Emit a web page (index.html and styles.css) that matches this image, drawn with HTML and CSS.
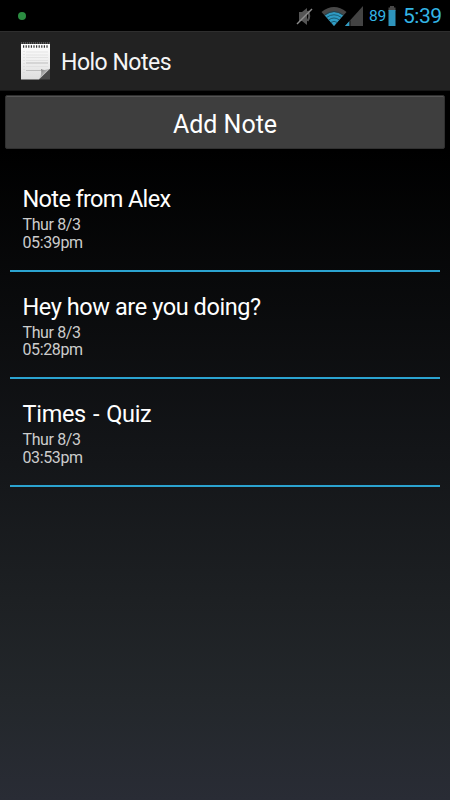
FILE: index.html
```html
<!DOCTYPE html>
<html>
    <head>
        <meta charset="utf-8">
        <title>Holo Notes</title>
        <link rel="stylesheet" href="styles.css">
    </head>
    <body>
        <div class="statusbar">
            <span class="led"></span>
            <svg class="mute" width="17" height="20" viewBox="0 0 17 20">
                <path d="M3 6h3l5-4v17l-5-4H3z" fill="#555"/>
                <path d="M11.500 5q3.500 5 0 10" fill="none" stroke="#555" stroke-width="2"/>
                <path d="M1 18L16 3" stroke="#8c8c8c" stroke-width="1.500"/>
            </svg>
            <svg class="wifi" width="26" height="20" viewBox="0 0 26 20">
                <path d="M0.500 6Q13-4 25.500 6L13 20z" fill="#484848"/>
                <path d="M4 9.500Q13 2.500 22 9.500L13 20z" fill="#2f9cc4"/>
                <path d="M3.500 9q9.500-7 19 0M5.500 11.500q7.500-5.500 15 0M7.500 14q5.500-4 11 0M9.700 16.500q3.300-2.400 6.600 0" fill="none" stroke="#0f4052" stroke-width="0.700"/>
            </svg>
            <svg class="signal" width="18" height="20" viewBox="0 0 18 20">
                <path d="M18 0v20H0z" fill="#434343"/>
                <path d="M4.500 15v5H0z" fill="#2f9cc4"/>
                <path d="M5 14.500v5.500" stroke="#111"/>
            </svg>
            <span class="percent">89</span>
            <svg class="battery" width="8" height="20" viewBox="0 0 8 20">
                <path d="M2 0h4v1.500h1.500V5h-7V1.500H2z" fill="#484848"/>
                <path d="M0.500 4h7v16h-7z" fill="#2e94bc"/>
            </svg>
            <span class="clock">5:39</span>
        </div>
        <div class="header">
            <svg class="logo" width="30" height="38" viewBox="0 0 30 38">
                <defs>
                    <linearGradient id="paper" x1="0" y1="0" x2="0" y2="1">
                        <stop offset="0" stop-color="#fff"/>
                        <stop offset="1" stop-color="#dedede"/>
                    </linearGradient>
                    <linearGradient id="fold" x1="0" y1="0" x2="1" y2="1">
                        <stop offset="0" stop-color="#666"/>
                        <stop offset="0.5" stop-color="#bbb"/>
                    </linearGradient>
                </defs>
                <path d="M1 2h29v25L19 37.500H1z" fill="url(#paper)"/>
                <path d="M19 37.500L30 27v10.500z" fill="#4a4a4a"/>
                <path d="M1 1h29" stroke="#555" stroke-width="2" stroke-dasharray="1.200 0.800"/>
                <path d="M3 4.500h26" stroke="#333" stroke-width="2.600" stroke-dasharray="1.200 1.400"/>
                <path d="M6 10h22M6 13h22M6 15.500h22M6 18.500h22M6 24.500h22" stroke="#dcdcdc" stroke-width="0.700"/>
                <path d="M6 21h22M6 28.500h15" stroke="#bdbdbd"/>
                <path d="M4 9v22" stroke="#d4d4d4" stroke-dasharray="1 2"/>
                <path d="M30 26.500L19 37.500q3-4 2-10.500 4 2 9-0.500z" fill="url(#fold)"/>
            </svg>
            <span class="title">Holo Notes</span>
        </div>
        <button class="add">Add Note</button>
        <div class="notes">
            <div class="note">
                <div class="name tight">Note from Alex</div>
                <div class="date">Thur 8/3</div>
                <div class="date">05:39pm</div>
            </div>
            <div class="note">
                <div class="name">Hey how are you doing?</div>
                <div class="date">Thur 8/3</div>
                <div class="date">05:28pm</div>
            </div>
            <div class="note">
                <div class="name spaced">Times - Quiz</div>
                <div class="date">Thur 8/3</div>
                <div class="date">03:53pm</div>
            </div>
        </div>
    </body>
</html>
```
FILE: styles.css
```css
body
{
    margin: 0;
    height: 800px;
    overflow: hidden;
    font-family: Roboto, sans-serif;
    color: #f5f5f5;
    background: linear-gradient(#000 0, #000 150px, #131518 450px, #1d2023 600px, #23272b 700px, #292c35 800px);
}
.statusbar
{
    display: flex;
    align-items: center;
    box-sizing: border-box;
    height: 31px;
    padding: 0 9px 0 18px;
    background-color: #000;
    color: #33b5e5;
}
.led
{
    width: 8px;
    height: 8px;
    border-radius: 50%;
    background-color: #2b8c41;
    margin-right: auto;
}
.wifi
{
    margin-left: 8px;
}
.signal
{
    margin-left: -2px;
}
.percent
{
    width: 18px;
    margin-left: 6px;
    font-size: 15.5px;
    letter-spacing: -0.3px;
}
.battery
{
    margin-left: 1px;
}
.clock
{
    width: 38px;
    margin-left: 7px;
    font-size: 21px;
    letter-spacing: -0.5px;
}
.header
{
    display: flex;
    align-items: center;
    box-sizing: border-box;
    height: 60px;
    padding-left: 20px;
    background-color: #222;
    border-top: 1px solid #2e2e2e;
    border-bottom: 1px solid #161616;
}
.title
{
    margin-left: 11px;
    padding-top: 2px;
    font-size: 23px;
    letter-spacing: -0.5px;
}
.add
{
    display: block;
    box-sizing: border-box;
    width: 440px;
    height: 54px;
    margin: 4px 5px 0;
    padding: 4px 0 0;
    border: 1px solid #303030;
    border-radius: 2px;
    background-color: #3e3e3e;
    box-shadow: inset 0 1px #555;
    color: #fff;
    font-family: inherit;
    font-size: 25px;
}
.notes
{
    margin: 15px 10px 0;
}
.note
{
    box-sizing: border-box;
    height: 107.5px;
    padding: 21px 12.5px 0;
    border-bottom: 2px solid #2ba3d0;
}
.name
{
    font-size: 23.5px;
    line-height: 28px;
    margin-bottom: 3px;
    letter-spacing: -0.42px;
    color: #fff;
}
.tight
{
    letter-spacing: -0.65px;
}
.spaced
{
    letter-spacing: -0.3px;
    word-spacing: 1.5px;
}
.date
{
    font-size: 16px;
    line-height: 17.5px;
    letter-spacing: -0.38px;
    color: #ccc;
}
```
